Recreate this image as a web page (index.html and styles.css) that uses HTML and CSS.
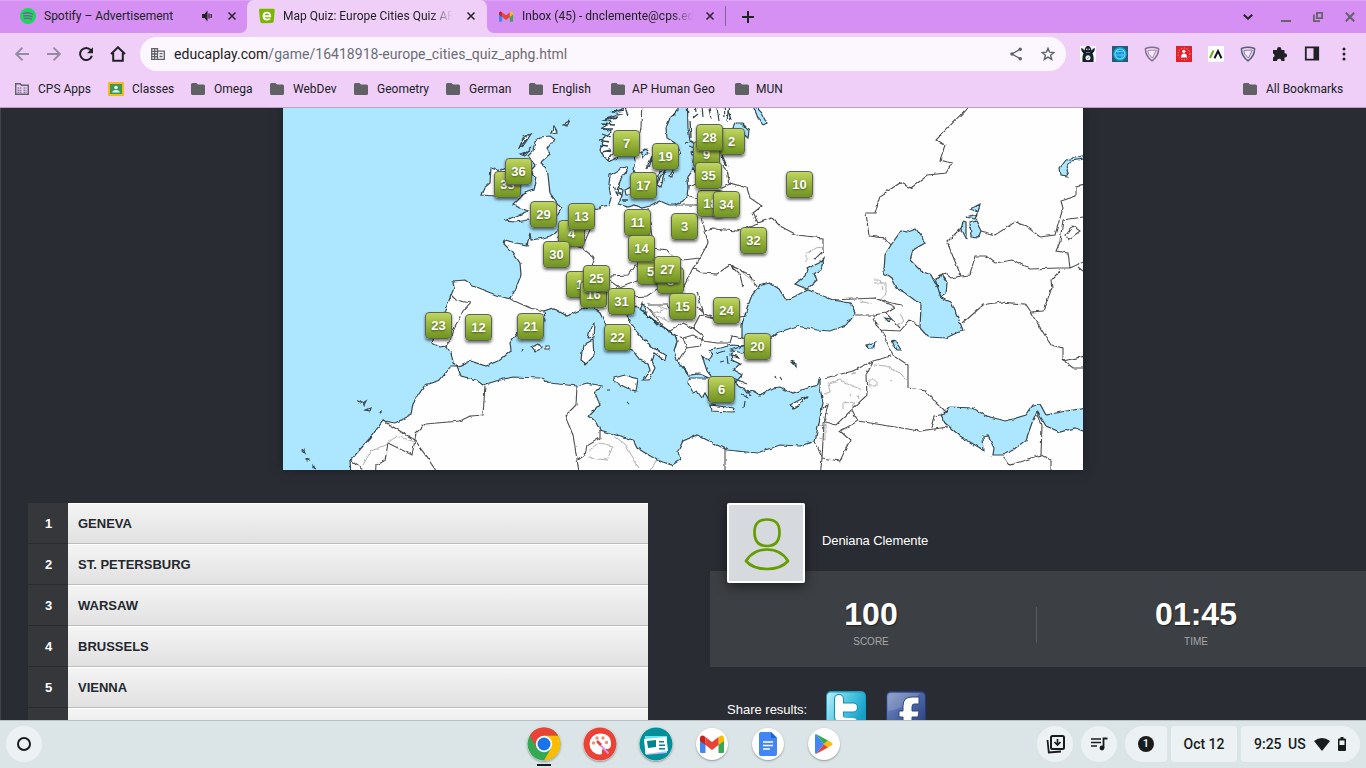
FILE: index.html
```html
<!DOCTYPE html>
<html lang="en">
<head>
<meta charset="utf-8">
<title>Map Quiz: Europe Cities Quiz APHG</title>
<link rel="stylesheet" href="styles.css">
</head>
<body>
<svg width="0" height="0" class="defs">
  <symbol id="folder" viewBox="0 0 14 12"><path d="M1.5 0H5.5L7 1.5H12.5Q14 1.5 14 3V10.5Q14 12 12.5 12H1.5Q0 12 0 10.5V1.5Q0 0 1.5 0Z" fill="#606164"/></symbol>
  <symbol id="close" viewBox="0 0 10 10"><path d="M1.5 1.5L8.5 8.5M8.5 1.5L1.5 8.5" stroke="currentColor" stroke-width="1.6" fill="none"/></symbol>
  <symbol id="gmail" viewBox="0 0 24 18"><path d="M0 3V16.5Q0 18 1.5 18H5.5V8Z" fill="#4285f4"/><path d="M24 3V16.5Q24 18 22.500 18H18.500V8Z" fill="#34a853"/><path d="M18.500 2L21 .5Q24 0 24 3V6L18.500 10Z" fill="#fbbc04"/><path d="M5.500 2L3 .5Q0 0 0 3V6L5.500 10Z" fill="#c5221f"/><path d="M5.500 2V10L12 15L18.500 10V2L12 7Z" fill="#ea4335"/></symbol>
  <symbol id="shield" viewBox="0 0 16 16"><path d="M1.500 2.500Q8 .2 14.500 2.500Q15 9.500 8 14.800Q1 9.500 1.500 2.500Z" fill="none" stroke="currentColor" stroke-width="1.500"/><path d="M4 4.500L12.300 4L8.500 12L4.500 8Z" fill="#f8e8fb" stroke="currentColor" stroke-width=".7"/></symbol>
</svg>

<header class="browser">
  <div class="tabs">
    <div class="tab tab-spotify">
      <svg class="fav" viewBox="0 0 16 16"><circle cx="8" cy="8" r="8" fill="#1ed760"/><path d="M3.400 5.300Q8.500 3.900 12.800 6.200M3.900 8Q8.300 6.800 12 8.800M4.300 10.500Q8 9.500 11.300 11.200" stroke="#8257a0" stroke-width="1.300" fill="none" stroke-linecap="round"/></svg>
      <span class="tab-title">Spotify – Advertisement</span>
      <svg class="audio" viewBox="0 0 11 12"><path d="M0 4H2.500L5.500 .5V11.500L2.500 8H0Z" fill="#202124"/><path d="M7 3.500V8.500M9.200 4V8" stroke="#202124" stroke-width="1.200"/></svg>
      <svg class="x"><use href="#close"/></svg>
    </div>
    <div class="tab tab-active">
      <svg class="fav" viewBox="0 0 16 16"><path d="M1 .8L14.500 .8Q16 1 15.700 3L14.800 13Q14.600 15 12.600 15L3.500 15.300Q1.500 15.300 1.200 13.500L0 3Q-.2 1 1 .8Z" fill="#7ab800"/><path d="M4.800 8.300H11.200Q11.200 4.600 8 4.600Q4.600 4.600 4.600 8Q4.600 11.600 8 11.600Q10 11.600 10.900 10.500" fill="none" stroke="#fff" stroke-width="1.900"/></svg>
      <span class="tab-title fade">Map Quiz: Europe Cities Quiz APHG</span>
      <svg class="x"><use href="#close"/></svg>
    </div>
    <div class="tab tab-mail">
      <svg class="fav mail"><use href="#gmail"/></svg>
      <span class="tab-title fade">Inbox (45) - dnclemente@cps.edu</span>
      <svg class="x"><use href="#close"/></svg>
      <i class="sep"></i>
    </div>
    <svg class="newtab" viewBox="0 0 12 12"><path d="M6 0V12M0 6H12" stroke="#202124" stroke-width="2"/></svg>
    <div class="window-controls">
      <svg width="10" height="6" viewBox="0 0 10 6"><path d="M.8 .8L5 4.800L9.200 .8" fill="none" stroke="#202124" stroke-width="1.900"/></svg>
      <svg width="10" height="10" viewBox="0 0 10 10"><path d="M0 9H10" stroke="#66616c" stroke-width="2"/></svg>
      <svg width="10" height="10" viewBox="0 0 10 10"><path d="M3.900 .9H9.100V6.100H3.900ZM.9 2.500V9.100H7" fill="none" stroke="#66616c" stroke-width="1.800"/></svg>
      <svg width="10" height="10" viewBox="0 0 10 10"><path d="M.8 .8L9.200 9.200M9.200 .8L.8 9.200" stroke="#66616c" stroke-width="2"/></svg>
    </div>
  </div>

  <div class="toolbar">
    <svg class="nav" viewBox="0 0 14 14"><path d="M14 7H1.500M7.500 .7L1.200 7L7.500 13.300" fill="none" stroke="#978aa3" stroke-width="1.900"/></svg>
    <svg class="nav" viewBox="0 0 14 14"><path d="M0 7H12.500M6.500 .7L12.800 7L6.500 13.300" fill="none" stroke="#978aa3" stroke-width="1.900"/></svg>
    <svg class="nav" viewBox="0 0 14 14"><path d="M11.800 3.200A6 6 0 1 0 12.900 8.800" fill="none" stroke="#202124" stroke-width="2"/><path d="M14 .2V6.200H8Z" fill="#202124"/></svg>
    <svg class="nav home" viewBox="0 0 16 16"><path d="M1 8L8 1.300L15 8M3.200 7V14.800H12.800V7" fill="none" stroke="#202124" stroke-width="2"/></svg>
    <div class="omnibox">
      <svg class="site" viewBox="0 0 14 12"><path d="M.7 .7H6.500V11.300H.7ZM6.500 3.200H13.300V11.300H6.500M1 3.300H6M1 6H6M1 8.700H6M3.600 1V11M8.500 5.700H11.500M8.500 8.500H11.500" fill="none" stroke="#5f6368" stroke-width="1.300"/></svg>
      <span class="url"><b>educaplay.com</b>/game/16418918-europe_cities_quiz_aphg.html</span>
      <svg class="share" viewBox="0 0 12 14"><path d="M10.300 2.300L2 7L10.300 11.700" fill="none" stroke="#5f6368" stroke-width="1.300"/><circle cx="10.200" cy="2.200" r="1.800" fill="#5f6368"/><circle cx="2" cy="7" r="1.800" fill="#5f6368"/><circle cx="10.200" cy="11.800" r="1.800" fill="#5f6368"/></svg>
      <svg class="star" viewBox="0 0 14 14"><path d="M7 1.300L8.600 5.200L12.900 5.500L9.600 8.200L10.700 12.400L7 10.100L3.300 12.400L4.400 8.200L1.100 5.500L5.400 5.200Z" fill="none" stroke="#5f6368" stroke-width="1.400"/></svg>
    </div>
    <div class="extensions">
      <svg viewBox="0 0 16 16"><path d="M0 0H16V16H0Z" fill="#f7f5f8"/><path d="M1 2Q3 2 4.500 4.500Q5 0 8 0T11.500 4.500Q13 2 15 2Q15 5 12.500 7.500Q14 10 13.500 16H2.500Q2 10 3.500 7.500Q1 5 1 2Z" fill="#14202a"/><circle cx="8" cy="11.800" r="2.500" fill="#eee"/><circle cx="6.800" cy="3.200" r=".7" fill="#fff"/><circle cx="9.200" cy="3.200" r=".7" fill="#fff"/><path d="M6 6.500H10M7 12.800L9.500 10.800" stroke="#7a8d92" stroke-width=".8"/></svg>
      <svg viewBox="0 0 16 16"><path d="M0 0H16V16H0Z" fill="#265b73"/><circle cx="8" cy="8" r="6.900" fill="#119ad5"/><circle cx="8" cy="8" r="5" fill="none" stroke="#7ad9f5" stroke-width="1.100"/><path d="M4 5.500H12M3.500 9H12M6 3.500V7M10 7V12" stroke="#66cff2" stroke-width=".8"/></svg>
      <svg class="sh1"><use href="#shield"/></svg>
      <svg viewBox="0 0 16 16"><path d="M0 0H16V16H0Z" fill="#df222c"/><circle cx="8" cy="8" r="5.900" fill="none" stroke="#fbd" stroke-width=".9" stroke-dasharray="1 1.700"/><circle cx="7.800" cy="5.300" r="1.600" fill="#fff"/><path d="M5 11.500Q5 7.500 8 7.500T11 11.500Z" fill="#fff"/></svg>
      <svg viewBox="0 0 16 16"><path d="M0 0H16V16H0Z" fill="#fff"/><path d="M2 12L5.500 4.500" stroke="#67a91b" stroke-width="1.900"/><path d="M6.500 12.300L10 5L13.500 12.300" fill="none" stroke="#10141b" stroke-width="2"/></svg>
      <svg class="sh2"><use href="#shield"/></svg>
      <svg viewBox="0 0 16 16"><path d="M1 4H5V3.300A2.200 2.200 0 0 1 9.400 3.300V4H12.500V7.300H13A2.100 2.100 0 0 1 13 11.500H12.500V15H9.400A2 2 0 0 0 5 15H1V11.400A2 2 0 0 0 1 7.500Z" fill="#202124"/></svg>
      <svg viewBox="0 0 16 16"><path d="M1.800 1.300H14.200V13.700H1.800Z" fill="none" stroke="#202124" stroke-width="1.800"/><path d="M9.500 1H14V14H9.500Z" fill="#202124"/></svg>
      <svg viewBox="0 0 16 16" fill="#202124"><circle cx="8" cy="3" r="1.500"/><circle cx="8" cy="8" r="1.500"/><circle cx="8" cy="13" r="1.500"/></svg>
    </div>
  </div>

  <nav class="bookmarks">
    <a><svg viewBox="0 0 14 12"><path d="M.7 .7H5.200L6.500 2.300H13.300V11.300H.7Z" fill="none" stroke="#5f6368" stroke-width="1.400"/><path d="M2.500 5H7M2.500 7.200H7M2.500 9.300H7M8.500 5H11.500M8.500 7.200H11.500M8.500 9.300H11.500" stroke="#5f6368" stroke-width="1.100" stroke-dasharray="1.500 .6"/></svg>CPS Apps</a>
    <a><svg class="classes" viewBox="0 0 16 14"><rect width="16" height="14" rx="1" fill="#f6b91c"/><path d="M2 2H14V12H2Z" fill="#3c9a58"/><circle cx="8" cy="5.500" r="1.700" fill="#fff"/><path d="M4.200 10.500Q4.500 8 8 8T11.800 10.500Z" fill="#dff3e4"/></svg>Classes</a>
    <a><svg><use href="#folder"/></svg>Omega</a>
    <a><svg><use href="#folder"/></svg>WebDev</a>
    <a><svg><use href="#folder"/></svg>Geometry</a>
    <a><svg><use href="#folder"/></svg>German</a>
    <a><svg><use href="#folder"/></svg>English</a>
    <a><svg><use href="#folder"/></svg>AP Human Geo</a>
    <a><svg><use href="#folder"/></svg>MUN</a>
    <a><svg><use href="#folder"/></svg>All Bookmarks</a>
  </nav>
</header>

<main class="page">
  <section class="map" id="map">
    <svg class="atlas" viewBox="283 108 800 362">
      <defs><filter id="coast" filterUnits="userSpaceOnUse" x="270" y="95" width="830" height="390"><feTurbulence type="fractalNoise" baseFrequency=".16" numOctaves="2" seed="4"/><feDisplacementMap in="SourceGraphic" scale="3.600" xChannelSelector="R" yChannelSelector="G"/></filter></defs>
      <path d="M270 95H1100V485H270Z" fill="#ade6ff"/>
      <g filter="url(#coast)">
        <g class="land">
          <path d="M628 90L625 108L613 112L621 114L603 120L612 122L602 128L611 131L605 136L600 150L603 156L610 161L617 158L628 151L633 148L635 160L633 170L637 181L643 193L650 196L657 184L660 171L668 167L677 158L680 151L675 143L667 138L666 128L670 118L678 110L679 90Z"/>
          <path d="M687 90L688 128L690 141L697 145L712 141L727 136L740 136L728 142L714 146L697 148L695 160L702 166L704 176L699 178L693 168L687 180L688 188L687 196L683 201L675 205L669 205L660 201L650 206L642 208L635 205L628 207L618 204L622 196L618 188L621 178L627 171L626 166L617 171L610 175L609 186L611 198L609 205L600 207L594 210L584 211L574 219L568 226L558 231L550 236L543 238L531 240L530 233L527 245L516 243L505 240L504 244L513 253L520 263L521 275L516 288L510 299L496 295L473 286L465 280L453 281L454 288L450 298L444 313L436 328L432 343L440 347L446 346L451 353L453 363L458 366L470 361L486 366L500 360L511 351L510 343L517 333L536 321L545 321L544 311L553 308L567 316L580 310L590 306L600 313L605 323L613 339L624 346L632 350L640 360L648 364L650 370L643 380L649 380L655 368L651 360L654 353L665 360L666 356L657 350L645 341L635 330L628 318L625 308L633 303L640 310L643 303L648 316L660 326L675 335L677 341L674 351L677 360L683 368L688 375L700 374L709 378L702 378L690 378L688 382L693 393L697 391L702 398L705 393L709 400L712 392L720 388L714 380L707 371L702 356L708 361L712 356L710 350L720 348L732 345L743 346L731 353L732 360L740 364L733 370L742 375L735 383L743 388L747 393L753 391L760 395L772 388L780 387L793 393L808 388L817 385L820 378L820 388L823 403L820 418L815 441L800 446L780 445L757 453L727 450L713 443L697 435L683 441L678 451L680 460L672 465L657 460L637 448L633 440L610 433L600 430L595 421L589 416L600 405L595 393L602 386L587 383L577 386L550 383L540 378L513 377L496 381L483 385L476 380L461 376L457 366L451 366L440 380L425 385L413 403L411 415L395 423L383 421L370 438L350 461L352 490L1110 490V90Z"/>
          <path d="M535 141L540 137L550 136L554 139L547 149L550 154L540 163L546 168L548 175L550 193L558 204L561 208L555 219L543 222L528 220L516 222L504 221L516 216L528 211L513 205L525 193L533 190L536 177L531 170L536 165L528 156L533 151Z"/>
          <path d="M491 168L500 171L506 168L511 177L508 195L496 196L481 195L484 188L490 183Z"/>
          <path d="M614 378L625 375L638 379L636 391L627 388L615 382ZM591 326L595 324L594 337L588 338ZM583 345L593 340L594 356L586 364L581 360ZM710 405L734 408L733 412L711 411ZM790 405L807 396L799 405L794 408ZM532 347L538 344L541 348L536 352ZM545 346H549V349H545ZM625 190L631 187L632 195L626 195ZM619 188L623 190L622 195L618 193ZM657 184L665 170L661 187ZM669 176L673 168L672 177ZM693 159L698 157L700 165L693 165ZM691 152L697 151L697 155H692Z"/>
          <path d="M519 148L524 137L531 134L523 146ZM520 154L529 151L525 156ZM551 133L554 127L557 132ZM563 125L570 120L567 126ZM358 401L361 402L359 403ZM363 403L366 401L364 405ZM366 410L371 408L370 411ZM379 412L381 411V413ZM302 450L304 449L305 453ZM306 459L309 460L307 461ZM313 464L315 469L313 468ZM522 352L523 349M709 349L712 355M716 354L725 351M720 362L724 361M727 356L728 364M740 394L749 398M745 401L744 408M627 402L630 404M607 391H610M747 391L751 396"/>
        </g>
        <g class="fjord">
          <path d="M612 112L624 110M604 120L618 117M602 124L614 125M601 129L613 129M602 134L610 137M600 140L609 142M599 146L607 147M602 152L611 150M608 159L613 152M625 108L628 115M640 309L654 320L672 333M645 312L658 326M520 147L528 138M523 154L532 147M689 146L696 148M693 118L698 114M683 366L688 374M731 355L740 357M733 378L748 384M614 186L618 196M622 200L629 200M690 120L691 138M728 110L731 120"/>
        </g>
        <g class="water">
          <path d="M760 286L770 283L779 289L786 300L797 295L808 290L816 293L833 300L850 303L855 313L846 325L830 331L817 330L797 326L777 333L768 341L750 344L742 338L742 325L747 308L752 295Z"/>
          <path d="M731 350L746 345L757 350L742 353ZM795 284L805 276L807 269L819 263L824 258L821 269L814 274L817 280L807 289Z"/>
          <path d="M901 231L908 232L916 229L921 236L925 243L913 250L910 260L921 271L931 275L936 285L938 288L941 298L951 302L956 313L963 330L946 338L928 337L920 328L921 305L908 295L896 288L891 278L884 273L885 255L891 245ZM935 279L941 275L947 283L946 294L941 297L938 288Z"/>
          <path d="M946 411L950 407L973 408L986 416L1006 421L1026 415L1033 405L1040 404L1046 415L1066 411L1096 407V432L1083 431L1075 428L1060 432L1046 426L1037 411L1033 420L1026 440L1013 450L1003 455L993 455L994 448L988 436L983 437L984 451L980 448L960 436L945 423L941 416Z"/>
          <path d="M970 223L976 221L981 231L978 238L971 237ZM963 221L966 222L966 240L961 230ZM970 209L980 204L978 212ZM966 217L977 214L975 219ZM1060 168L1066 160L1090 154V158L1071 161L1066 170L1068 176L1061 175ZM735 123L742 123L749 130L748 138L740 131L733 129ZM752 103L762 113L767 123L763 125L758 118ZM640 152L645 149L648 152L643 158ZM647 168L652 156L650 166ZM867 345L875 342L874 348L868 348ZM892 341L896 342L901 350L896 350ZM791 361L796 363L796 366ZM885 318L891 319L889 322ZM775 376L776 379M780 377L782 380M722 155L727 166L723 161ZM693 90L696 112M701 97L703 117M708 102L711 119M715 95L719 121M723 90L725 117M730 91L727 122M684 142L690 143"/>
        </g>
        <g class="border">
          <path d="M642 100L641 128L638 145M722 165L727 171L730 183L747 188L750 198L762 206L753 213L758 223L772 218L780 226L797 235L823 238L823 251L814 260M688 186L697 183L722 188L731 184M687 195L699 199M675 205L698 205M702 218L705 231L708 243L700 258L697 263L693 268L702 273L717 274L730 265L750 275L757 287M705 231L713 229L737 231L758 224M653 248L667 250L672 256L683 260L700 258M730 265L740 275L743 287M693 268L683 288M648 208L650 221L652 238L653 248L640 250M593 210L593 223L585 241L582 248L595 258L592 266L584 274M557 237L570 243L582 248M592 274L610 276L628 275L635 265L652 268M592 286L610 281L620 288L637 281L652 280L665 282M584 285L580 295L588 307M632 297L647 296L657 289L669 292"/>
          <path d="M647 305L667 305L676 319M647 307L663 325M668 331L683 323L693 328L700 315L717 320L747 316M693 328L702 335L703 341L717 343L730 343L732 336L743 338M675 335L683 338L693 335L703 340L700 346L687 348L683 338M686 349L683 353L678 361M697 307L705 314L713 318M697 291L704 315M510 299L530 308L544 311M451 295L456 300L470 303L463 311L458 321L454 328L452 338L446 346"/>
          <path d="M485 386L483 415L470 416L460 421L425 424L416 433L415 440L412 455L388 443L385 461L376 465L375 480M383 421L415 440L441 478M350 460L367 473M577 386L576 405L565 416L573 435L580 478M600 430L600 438L587 446L585 455L578 460M725 448V478M815 441L822 458L820 478M822 410L828 404L824 423L822 458M822 458L840 461L850 440L840 431L858 421L920 431L948 427M825 378L853 371L873 361L891 356M873 361L866 375L867 395L836 425L825 422M852 410L858 421M881 330L893 355L908 365L908 388L926 391L936 403L946 413M945 414L935 416L932 428M1003 456L1010 465L1041 455L1042 425L1037 412M1041 455L1051 460V480M833 300L875 298L891 303L903 305M855 315L873 315L886 313L900 328M873 315L876 325L881 330L900 331L910 320L920 328M875 298L895 307L885 313M963 323L983 305L1000 302L1025 304L1031 313L1051 345L1063 348V360L1073 368H1090M1031 312L1043 311L1052 288L1051 280L1060 271M1063 361L1090 355"/>
          <path d="M972 103L936 140L945 145L940 160L952 163L946 173L928 175L911 188L900 183L880 196L875 213L866 213L869 236L885 238L891 245M981 231L995 235L1015 222L1026 226L1040 237L1055 235L1063 208L1061 201L1076 196L1076 186L1090 183M963 226L947 242L961 276L951 278L945 273L935 279M961 276L970 275L975 256L986 256L995 263L1013 260L1030 269L1058 268L1070 268L1068 253L1056 251L1060 242L1063 220L1090 216M1066 235L1073 226L1080 231L1068 240ZM1070 268L1090 259M1078 267L1088 275"/>
        </g>
        <path class="minor" d="M363 465L371 451L386 445L396 436L415 442M588 451L600 443L613 446L607 460L588 458M610 433L625 444L639 468M657 460L650 470M874 365L886 366L900 373L908 381M869 380H876V386H869ZM828 383L840 380L862 390M828 383L830 392L824 394M843 409V403L855 402L851 412M819 426L825 424V440L819 438M874 283H886V293L879 301M900 314L904 320L897 326M874 280L880 280L883 290M860 301L872 304M655 305L667 309L653 313L669 322M806 262L806 255L815 248L823 247M742 272L754 282M850 394L851 396M858 395L859 399M851 374L856 373M889 380L892 381"/>
      </g>
    </svg>
  </section>

  <section class="results">
    <ol class="answers">
      <li><b>1</b><span>GENEVA</span></li>
      <li><b>2</b><span>ST. PETERSBURG</span></li>
      <li><b>3</b><span>WARSAW</span></li>
      <li><b>4</b><span>BRUSSELS</span></li>
      <li><b>5</b><span>VIENNA</span></li>
      <li><b></b><span></span></li>
    </ol>
    <aside class="summary">
      <div class="player">
        <svg class="avatar" viewBox="0 0 78 80"><path d="M0 2Q0 0 2 0H76Q78 0 78 2V78Q78 80 76 80H2Q0 80 0 78Z" fill="#fff"/><path d="M2 2H76V78H2Z" fill="#d6dade"/><path d="M40 16.500Q27.500 16.500 27.500 29Q27.500 43 40 43Q52.500 43 52.500 29Q52.500 16.500 40 16.500ZM19 58Q26 46.500 40 46.500T61 58Q54 66 40 66T19 58Z" fill="none" stroke="#659d00" stroke-width="2.700" stroke-linejoin="round"/></svg>
        <span>Deniana Clemente</span>
      </div>
      <div class="stats">
        <div><strong>100</strong><small>SCORE</small></div>
        <i></i>
        <div><strong>01:45</strong><small>TIME</small></div>
      </div>
      <div class="share-row">
        <span>Share results:</span>
        <svg viewBox="0 0 40 40"><defs><linearGradient id="tw" x2="1" y2=".5"><stop stop-color="#b8f0fa"/><stop offset=".55" stop-color="#4cc5e0"/><stop offset="1" stop-color="#149fc8"/></linearGradient></defs><rect width="40" height="40" rx="5" fill="#189cc0"/><rect x="1" y="1.500" width="38" height="38" rx="4" fill="url(#tw)"/><path d="M13 8V24Q13 32 21 32H27M13 16.500H27" fill="none" stroke="#168cb0" stroke-width="10" stroke-linecap="round"/><path d="M13 8V24Q13 31 21 31H27M13 16.500H27" fill="none" stroke="#fff" stroke-width="8" stroke-linecap="round"/></svg>
        <svg viewBox="0 0 40 40"><defs><linearGradient id="fb" x2="1" y2="1"><stop stop-color="#8092c1"/><stop offset=".4" stop-color="#526ba9"/><stop offset="1" stop-color="#253c7b"/></linearGradient></defs><rect width="40" height="40" rx="5" fill="#243b77"/><rect x="1" y="1.500" width="38" height="38" rx="4" fill="url(#fb)"/><path d="M2 20V7Q2 2 7 2H34Q22 17 2 20Z" fill="#fff" opacity=".16"/><path d="M33 6V13H28Q26 13 26 16V20H33L32 26H26V40H17V26H13V20H17V15Q17 6 26 6Z" fill="#fff" stroke="#304785" stroke-width="1"/></svg>
      </div>
    </aside>
  </section>
</main>

<footer class="shelf">
  <div class="launcher"><i></i></div>
  <div class="apps">
    <svg class="running" viewBox="0 0 34 34"><circle cx="17" cy="17" r="16.500" fill="#34a853"/><path d="M2.700 8.750A16.500 16.500 0 0 1 31.300 8.750H17L9.850 21.100Z" fill="#ea4335"/><path d="M31.300 8.750A16.500 16.500 0 0 1 17 33.500L24.100 21.100L17 8.750Z" fill="#fbbc04"/><circle cx="17" cy="17" r="8.200" fill="#fff"/><circle cx="17" cy="17" r="6.500" fill="#1a73e8"/></svg>
    <svg viewBox="0 0 34 34"><circle cx="17" cy="17" r="16.500" fill="#ea4335"/><path d="M17 6.500A10.500 10.500 0 0 0 17 27.500Q19.500 27.500 19 25Q18 22 21 22H24Q28 22 28 17Q28 6.500 17 6.500Z" fill="#fff"/><g fill="#f18b7d"><circle cx="10.500" cy="16" r="1.700"/><circle cx="14" cy="11" r="1.700"/><circle cx="20" cy="11" r="1.700"/><circle cx="23.500" cy="15.500" r="1.700"/></g><path d="M14.500 15L25.500 26.500" stroke="#df8fe8" stroke-width="2"/><path d="M14 14L18 18" stroke="#ea4335" stroke-width="2.500"/></svg>
    <svg viewBox="0 0 34 34"><circle cx="17" cy="17" r="16.500" fill="#00909a"/><path d="M5 12L26 10L28 26L7 28Z" fill="#b6bef7"/><path d="M6 9H28V25H6Z" fill="#70e5e7"/><path d="M5 12L27.500 10L29 24L6.500 27Z" fill="#fff"/><path d="M8 14L17 13V20L9 21ZM20 14H25V15.500H20ZM20 17.500H26V19H20ZM20 21H26V22.500H20Z" fill="#00848e"/></svg>
    <div><svg class="g" viewBox="0 0 24 18"><use href="#gmail"/></svg></div>
    <div><svg class="doc" viewBox="0 0 18 24"><path d="M2 0H12L18 6V22Q18 24 16 24H2Q0 24 0 22V2Q0 0 2 0Z" fill="#4285f4"/><path d="M12 0L18 6H12Z" fill="#1967d2"/><path d="M4 10H14M4 13.500H14M4 17H11" stroke="#fff" stroke-width="1.500"/></svg></div>
    <div><svg class="play" viewBox="0 0 18 20"><path d="M1 0L9 10L1 20Q0 20 0 18V2Q0 0 1 0Z" fill="#4285f4"/><path d="M1 0L13 6.500L9 10Z" fill="#34a853"/><path d="M1 20L13 13.500L9 10Z" fill="#ea4335"/><path d="M13 6.500L17 9Q18.200 10 17 11L13 13.500L9 10Z" fill="#fbbc04"/></svg></div>
  </div>
  <div class="tray">
    <div class="round"><svg width="19" height="19" viewBox="0 0 19 19"><rect x="5" y="1" width="13" height="13" rx="1.500" fill="none" stroke="#191c1d" stroke-width="2"/><path d="M1.500 5L2.800 17.500L15 16.500" fill="none" stroke="#191c1d" stroke-width="1.800"/><path d="M11.500 4V9.500M8.500 7L11.500 10L14.500 7" fill="none" stroke="#191c1d" stroke-width="1.700"/></svg></div>
    <div class="round"><svg width="17" height="14" viewBox="0 0 17 14"><path d="M0 2H10M0 5.500H10M0 9H6" stroke="#191c1d" stroke-width="1.600"/><path d="M12.500 11V1.500H16.500" fill="none" stroke="#191c1d" stroke-width="1.800"/><circle cx="11" cy="11" r="2.400" fill="#191c1d"/></svg></div>
    <div class="pill count"><span>1</span></div>
    <div class="pill date">Oct 12</div>
    <div class="pill status"><span class="time">9:25</span><span>US</span><svg width="16" height="13" viewBox="0 0 16 13"><path d="M0 3Q8 -3 16 3L8 13Z" fill="#191c1d"/></svg><svg width="8" height="14" viewBox="0 0 8 14"><path d="M2.500 0H5.500V1.500H7Q8 1.500 8 2.500V13Q8 14 7 14H1Q0 14 0 13V2.500Q0 1.500 1 1.500H2.500Z" fill="#191c1d"/><path d="M1.500 3.500H6.500V8H1.500Z" fill="#ecf2f3"/></svg></div>
  </div>
</footer>
<script src="script.js"></script>
</body>
</html>
```
FILE: styles.css
```css
* { box-sizing: border-box; }
body { margin: 0; width: 1366px; height: 768px; overflow: hidden; display: flex; flex-direction: column; background: #2a2c34; font-family: "Liberation Sans", Arial, sans-serif; }
svg { display: block; flex: none; }
.defs { position: absolute; }

.browser { height: 108px; flex: none; background: #efcff8; border-bottom: 1px solid #b9a3c3; font: 12px Roboto, sans-serif; color: #202124; }
.tabs { height: 33px; display: flex; align-items: center; background: linear-gradient(#efcff8, #efcff8) 240px 8px / 255px 25px no-repeat, #d68ff2; box-shadow: inset 0 1px #dca3f4; }
.tab { height: 33px; display: flex; align-items: center; padding-bottom: 1px; }
.tab-spotify { width: 247px; padding-left: 20px; background: #d68ff2; border-bottom-right-radius: 7px; box-shadow: inset 0 1px #dca3f4; }
.tab-active { width: 240px; padding-left: 12px; background: #efcff8; border-radius: 7px 7px 0 0; }
.tab-mail { width: 239px; padding-left: 12px; background: #d68ff2; border-bottom-left-radius: 7px; box-shadow: inset 0 1px #dca3f4; }
.fav { width: 16px; height: 16px; }
.fav.mail { width: 14px; height: 11px; }
.tab-title { margin-left: 8px; white-space: nowrap; overflow: hidden; line-height: 20px; }
.tab-spotify .tab-title { width: 150px; }
.tab-active .tab-title { width: 171px; }
.tab-mail .tab-title { width: 173px; margin-left: 9px; }
.fade { -webkit-mask-image: linear-gradient(90deg, #000 86%, transparent 99%); mask-image: linear-gradient(90deg, #000 86%, transparent 99%); }
.audio { width: 11px; height: 12px; margin-left: 8px; }
.x { width: 10px; height: 10px; margin-left: 12px; color: #2d2433; }
.tab-spotify .x { margin-left: 14px; }
.tab-mail .x { margin-left: 10px; }
.sep { width: 1px; height: 20px; margin-left: 10px; background: #85649a; }
.newtab { width: 12px; height: 12px; margin-left: 16px; }
.window-controls { margin-left: auto; padding-right: 11px; display: flex; align-items: center; gap: 22px; }
.window-controls svg:first-child { margin-right: 6px; }

.toolbar { height: 42px; display: flex; align-items: center; padding-left: 15px; }
.nav { width: 14px; height: 14px; margin-right: 18px; }
.nav:nth-child(3) { margin-right: 17px; }
.toolbar .home { width: 16px; height: 16px; margin-right: 14px; }
.omnibox { width: 926px; height: 34px; border-radius: 17px; background: #fcf6fe; display: flex; align-items: center; padding: 0 11px; }
.site { width: 14px; height: 12px; }
.url { margin-left: 9px; font-size: 14px; letter-spacing: .03px; color: #6b6d74; flex: 1; }
.url b { font-weight: 400; color: #202124; }
.share { width: 12px; height: 14px; margin-right: 19px; }
.star { width: 14px; height: 14px; }
.extensions { display: flex; gap: 16px; margin-left: 14px; }
.extensions svg { width: 16px; height: 16px; }
.sh1 { color: #80718c; }
.sh2 { color: #576077; }

.bookmarks { height: 28px; display: grid; grid-template-columns: 93px 83px 79px 84px 92px 83px 82px 124px 508px 110px; padding-left: 15px; align-items: center; }
.bookmarks a { display: flex; align-items: center; gap: 9px; white-space: nowrap; }
.bookmarks svg { width: 14px; height: 12px; }
.bookmarks .classes { width: 16px; height: 14px; }
.bookmarks a:nth-child(2) { gap: 8px; }
.bookmarks a:nth-child(8) { gap: 7px; letter-spacing: .12px; }
.bookmarks a:nth-child(9) { gap: 7px; }

.page { height: 612px; flex: none; overflow: hidden; background: #2a2c34; border-left: 1px solid #46424e; }
.map { position: relative; width: 800px; height: 362px; margin: 0 auto 33px 282px; box-shadow: 0 0 10px #1b1d22; overflow: hidden; }
.atlas { width: 800px; height: 362px; }
.land path { fill: #fefefe; stroke: #344850; stroke-width: 1.2; }
.fjord { fill: none; stroke: #2b4550; stroke-width: 1.3; }
.water path { fill: #ade6ff; stroke: #344850; stroke-width: 1.2; }
.border { fill: none; stroke: #4d4d4d; stroke-width: 1.1; }
.minor { fill: none; stroke: #b0b0b0; stroke-width: 1; }
.pin { position: absolute; width: 27px; height: 27px; border: 1px solid #5c6457; border-radius: 4px; background: linear-gradient(#c0d660, #97b43b 50%, #6f9221); box-shadow: 0 2px 3px rgba(0, 0, 0, .55); color: #fff; text-align: center; font-size: 13px; font-weight: 700; line-height: 26px; text-shadow: 0 1px 2px #455719; }

.results { display: flex; padding-left: 27px; }
.answers { width: 620px; margin: 0; padding: 0; list-style: none; font-size: 13px; font-weight: 700; }
.answers li { height: 41px; display: flex; }
.answers b { width: 40px; padding-left: 1px; background: #35373b; color: #fff; text-align: center; border-bottom: 1px solid #292b2e; line-height: 41px; }
.answers span { flex: 1; padding-left: 10px; color: #25282e; background: linear-gradient(#f4f4f4, #e1e1e1); border-top: 1px solid #fff; border-bottom: 1px solid #bdbdbd; line-height: 39px; }
.summary { width: 656px; margin-left: 62px; color: #fff; font-size: 13px; }
.player { height: 68px; padding-left: 17px; display: flex; align-items: flex-start; position: relative; }
.avatar { width: 78px; height: 80px; filter: drop-shadow(0 3px 6px rgba(0, 0, 0, .5)); }
.player span { margin: 30px 0 0 17px; letter-spacing: -.1px; }
.stats { height: 96px; background: #3c3f43; display: grid; grid-template-columns: 326px 1px 1fr; align-items: center; text-align: center; }
.stats div { display: flex; flex-direction: column; padding-top: 5px; }
.stats div:first-child { padding-right: 4px; }
.stats div:last-child { padding-right: 11px; }
.stats i { height: 36px; margin-top: 12px; background: #5a5d61; }
.stats strong { font-size: 32px; line-height: 36px; text-shadow: 1px 1px 1px #222; }
.stats small { font-size: 10px; line-height: 12px; margin-top: 4px; color: #a6a8ab; }
.share-row { display: flex; padding: 24px 0 0 17px; }
.share-row span { width: 99px; padding-top: 11px; }
.share-row svg { width: 40px; height: 40px; margin-right: 20px; }

.shelf { height: 48px; flex: none; padding-bottom: 1px; background: linear-gradient(#191c1d, #191c1d) 537px 43px / 14px 2px no-repeat, #dbe4e6; border-top: 1px solid #b8c0c3; display: flex; align-items: center; font: 500 14px Roboto, sans-serif; color: #191c1d; }
.launcher { margin-left: 6px; width: 36px; height: 36px; border-radius: 50%; background: #ecf2f3; display: grid; place-items: center; }
.launcher i { width: 14px; height: 14px; border: 2px solid #191c1d; border-radius: 50%; }
.apps { margin-left: 485px; display: flex; gap: 22px; }
.apps > * { width: 34px; height: 34px; border-radius: 50%; box-shadow: 0 1px 2px rgba(60, 64, 67, .45); }
.apps > div { width: 32px; height: 32px; margin: 1px; background: #fff; display: grid; place-items: center; }
.apps .g { width: 24px; height: 18px; }
.apps .doc { width: 18px; height: 24px; }
.apps .play { width: 18px; height: 20px; }
.tray { margin-left: auto; padding-right: 6px; display: flex; }
.round { width: 36px; height: 36px; margin-right: 8px; border-radius: 50%; background: #ecf2f3; display: grid; place-items: center; }
.pill { height: 36px; margin-right: 4px; background: #ecf2f3; border-radius: 4px; display: flex; align-items: center; justify-content: center; }
.count { width: 42px; border-radius: 18px 4px 4px 18px; }
.count span { width: 16px; height: 16px; border-radius: 50%; background: #191c1d; color: #fff; font-size: 11px; line-height: 16px; text-align: center; }
.date { width: 66px; }
.status { width: 119px; margin-right: 0; border-radius: 4px 18px 18px 4px; justify-content: flex-start; padding-left: 13px; }
.status .time { width: 34px; }
.status svg { margin-left: 8px; }
```
FILE: script.js
```js
// City pins: number followed by the centre of the pin on the 800x362 map.
const pins = [
  [1, 296, 177], [2, 448, 34], [3, 401, 119], [4, 288, 126], [5, 367, 164],
  [6, 438, 282], [7, 343, 36], [8, 387, 173], [9, 423, 47], [10, 516, 77],
  [11, 354, 115], [12, 195, 220], [13, 298, 109], [14, 358, 141], [15, 399, 199],
  [16, 310, 187], [17, 360, 78], [18, 427, 96], [19, 382, 49], [20, 474, 239],
  [21, 247, 219], [22, 334, 230], [23, 155, 218], [24, 443, 203], [25, 313, 171],
  [27, 384, 162], [28, 426, 30], [29, 260, 107], [30, 273, 147], [31, 338, 194],
  [32, 470, 133], [33, 224, 77], [34, 443, 97], [35, 425, 68], [36, 235, 64]
];
const map = document.getElementById("map");
for (const [label, x, y] of pins) {
  const pin = document.createElement("span");
  pin.className = "pin";
  pin.textContent = label;
  pin.style.left = x - 13 + "px";
  pin.style.top = y - 14 + "px";
  map.append(pin);
}
```
